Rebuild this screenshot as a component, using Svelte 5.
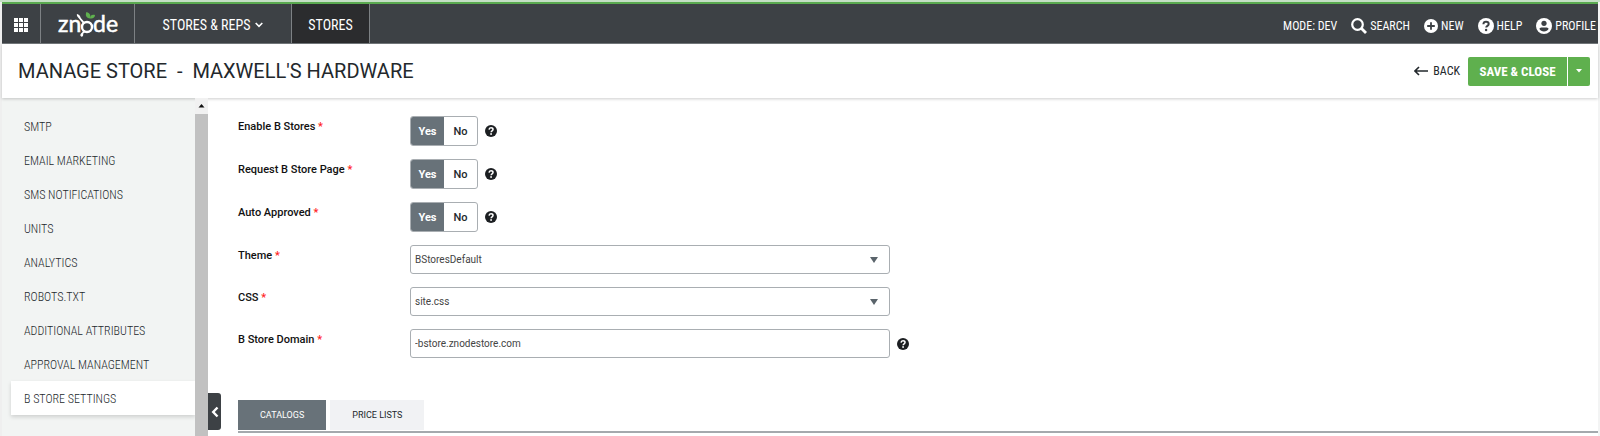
<script>
    const menu = [
        "SMTP",
        "Email Marketing",
        "SMS Notifications",
        "Units",
        "Analytics",
        "Robots.txt",
        "Additional Attributes",
        "Approval Management",
        "B Store Settings",
    ];

    const dots = [0, 5, 10];
    const tabs = ["Catalogs", "Price Lists"];

    let activeItem = $state("B Store Settings");
    let activeTab = $state("Catalogs");
    let theme = $state("BStoresDefault");
    let css = $state("site.css");
    let domain = $state("-bstore.znodestore.com");

    let toggles = $state([
        { id: "enable", label: "Enable B Stores", value: "yes" },
        { id: "request", label: "Request B Store Page", value: "yes" },
        { id: "approved", label: "Auto Approved", value: "yes" },
    ]);
</script>

{#snippet helpIcon(size)}
    <svg width={size} height={size} viewBox="0 0 16 16" aria-hidden="true">
        <circle class="disc" cx="8" cy="8" r="8" />
        <path
            class="mark"
            d="M5.4 6.2C5.5 4.6 6.5 3.8 8 3.8c1.600 0 2.700.9 2.700 2.200 0 1.900-2.500 1.800-2.500 3.600"
        />
        <circle class="dot" cx="8.1" cy="12" r="1.200" />
    </svg>
{/snippet}

<div class="page">
    <header class="topbar">
        <button class="apps" aria-label="Applications">
            <svg width="14" height="14" viewBox="0 0 14 14">
                {#each dots as y}
                    {#each dots as x}
                        <rect {x} {y} width="4" height="4" fill="#fff" />
                    {/each}
                {/each}
            </svg>
        </button>
        <a class="logo" href="/" aria-label="znode">
            <svg width="64" height="34" viewBox="0 0 64 34">
                <text x="2" y="24">zn</text>
                <text x="37" y="24">de</text>
                <g transform="translate(0 3)">
                    <circle cx="31" cy="16" r="5" fill="none" stroke="#fff" stroke-width="2.400" />
                    <path d="M27 12.500L23 7.500C21 5.500 20.500 4 21 3c1.800.3 3.300 2 3.800 4l4 4.500z" fill="#fff" />
                    <path d="M28 19.500l-3 3c-1 1.200-1 2.500.5 3.200 1.500-.2 2-1.700 1.600-3l2.400-2z" fill="#fff" />
                    <path d="M34 7.500C30 7 29 4 30.500 1c3.500 1 4.500 3.500 3.500 6.500z" fill="#5fb04e" />
                    <path d="M34 7.500C34 4.500 36 3 39 4c0 2.500-2 4-5 3.500z" fill="#5fb04e" />
                </g>
            </svg>
        </a>
        <button class="section">
            Stores &amp; Reps
            <svg width="8" height="6" viewBox="0 0 8 6">
                <path d="M.7 1L4 4.300 7.300 1" fill="none" stroke="#fff" stroke-width="1.600" />
            </svg>
        </button>
        <a class="current" href="/stores">Stores</a>
        <nav class="tools">
            <span>Mode: Dev</span>
            <a href="/search">
                <svg width="16" height="16" viewBox="0 0 16 16">
                    <circle cx="6.500" cy="6.500" r="5.300" fill="none" stroke="#fff" stroke-width="2.200" />
                    <path d="M10.500 10.500L15 15" stroke="#fff" stroke-width="2.800" />
                </svg>
                Search
            </a>
            <a href="/new">
                <svg width="14" height="14" viewBox="0 0 14 14">
                    <circle cx="7" cy="7" r="7" fill="#fff" />
                    <path d="M7 3.200v7.600M3.200 7h7.600" stroke="#3d4145" stroke-width="1.800" />
                </svg>
                New
            </a>
            <a class="light" href="/help">{@render helpIcon(16)} Help</a>
            <a href="/profile">
                <svg width="16" height="16" viewBox="0 0 16 16">
                    <circle cx="8" cy="8" r="8" fill="#fff" />
                    <circle cx="8" cy="5.300" r="2.600" fill="#3d4145" />
                    <path d="M3.300 10.800C4.500 9 6.200 9.600 8 9.600s3.500-.6 4.700 1.200c-1 1.800-2.700 2.800-4.700 2.800s-3.700-1-4.700-2.800z" fill="#3d4145" />
                </svg>
                Profile
            </a>
        </nav>
    </header>

    <div class="titlebar">
        <h1>Manage Store &nbsp;- &nbsp;Maxwell's Hardware</h1>
        <a class="back" href="/stores">
            <svg width="14" height="10" viewBox="0 0 14 10">
                <path d="M5 1L1 5l4 4M1 5h13" fill="none" stroke="#23282c" stroke-width="1.600" />
            </svg>
            Back
        </a>
        <div class="save">
            <button class="save-main">Save &amp; Close</button>
            <button class="save-more" aria-label="More save options">
                <svg width="6" height="4" viewBox="0 0 6 4"><path d="M0 0h6L3 3.500z" fill="#fff" /></svg>
            </button>
        </div>
    </div>

    <div class="body">
        <aside>
            <ul>
                {#each menu as item}
                    <li>
                        <button class:active={item === activeItem} onclick={() => (activeItem = item)}>
                            {item}
                        </button>
                    </li>
                {/each}
            </ul>
            <div class="scrollbar">
                <svg width="13" height="16" viewBox="0 0 13 16">
                    <path d="M3.500 9.500L6.500 6l3 3.500z" fill="#111" />
                </svg>
                <div class="thumb"></div>
            </div>
        </aside>
        <button class="collapse" aria-label="Collapse menu">
            <svg width="8" height="12" viewBox="0 0 8 12">
                <path d="M6.500 1.500L2.200 6l4.300 4.500" fill="none" stroke="#fff" stroke-width="2.400" />
            </svg>
        </button>

        <main>
            <form>
                {#each toggles as toggle}
                    <div class="row" role="group" aria-labelledby={toggle.id}>
                        <span class="label" id={toggle.id}>{toggle.label} <em>*</em></span>
                        <div class="switch">
                            <label>
                                <input type="radio" name={toggle.id + "-value"} value="yes" bind:group={toggle.value} />
                                <span>Yes</span>
                            </label>
                            <label>
                                <input type="radio" name={toggle.id + "-value"} value="no" bind:group={toggle.value} />
                                <span>No</span>
                            </label>
                        </div>
                        {@render helpIcon(12)}
                    </div>
                {/each}
                <div class="row">
                    <label class="label" for="theme">Theme <em>*</em></label>
                    <div class="select">
                        <select id="theme" bind:value={theme}>
                            <option>BStoresDefault</option>
                        </select>
                        <svg width="8" height="6" viewBox="0 0 8 6"><path d="M0 0h8L4 6z" fill="#5a646b" /></svg>
                    </div>
                </div>
                <div class="row">
                    <label class="label" for="css">CSS <em>*</em></label>
                    <div class="select">
                        <select id="css" bind:value={css}>
                            <option>site.css</option>
                        </select>
                        <svg width="8" height="6" viewBox="0 0 8 6"><path d="M0 0h8L4 6z" fill="#5a646b" /></svg>
                    </div>
                </div>
                <div class="row">
                    <label class="label" for="domain">B Store Domain <em>*</em></label>
                    <input id="domain" type="text" bind:value={domain} />
                    {@render helpIcon(12)}
                </div>
            </form>
            <div class="tabs" role="tablist">
                {#each tabs as tab}
                    <button
                        role="tab"
                        aria-selected={tab === activeTab}
                        class:active={tab === activeTab}
                        onclick={() => (activeTab = tab)}
                    >
                        {tab}
                    </button>
                {/each}
            </div>
        </main>
    </div>
</div>

<style>
    :global(body) {
        background: #fff;
    }

    .page {
        display: flex;
        flex-direction: column;
        box-sizing: border-box;
        min-height: 100vh;
        padding: 0 2px;
        border-top: 2px solid #c5dfc5;
        background: #fff;
        box-shadow: inset 2px 0 #efefef, inset -2px 0 #f3f4f4;
        font-family: "Roboto", sans-serif;
        color: #23282c;
    }

    button {
        padding: 0;
        border: 0;
        background: none;
        font: inherit;
        color: inherit;
        text-transform: uppercase;
        white-space: nowrap;
        cursor: pointer;
    }

    a {
        color: inherit;
        text-decoration: none;
    }

    svg {
        flex: none;
    }

    .topbar,
    .titlebar,
    aside,
    .tabs {
        font-family: "Roboto Condensed", "Liberation Sans Narrow", sans-serif;
        text-transform: uppercase;
    }

    .topbar {
        display: flex;
        height: 39px;
        border-top: 2px solid #5aaa50;
        border-bottom: 1px solid #74797c;
        background: #3d4145;
        color: #fff;
        font-size: 14px;
    }

    .topbar > button,
    .topbar > a {
        display: flex;
        align-items: center;
        justify-content: center;
        box-sizing: border-box;
        padding-top: 2px;
        border-right: 1px solid #7d8184;
    }

    .apps {
        width: 39px;
    }

    .logo {
        width: 94px;
    }

    .logo text {
        fill: #fff;
        stroke: #fff;
        stroke-width: 0.5px;
        font-family: Lato, sans-serif;
        font-size: 23px;
        text-transform: none;
    }

    .section {
        gap: 5px;
        width: 157px;
    }

    .current {
        width: 78px;
        background: #2b2c2e;
    }

    .tools {
        display: flex;
        gap: 14px;
        margin-left: auto;
        padding: 4px 2px 0 0;
        font-size: 12px;
    }

    .tools a,
    .tools span {
        display: flex;
        align-items: center;
        gap: 3px;
    }

    .disc {
        fill: #1c1f22;
    }

    .mark {
        fill: none;
        stroke: #fff;
        stroke-width: 2;
    }

    .dot {
        fill: #fff;
    }

    .light .disc {
        fill: #fff;
    }

    .light .mark {
        stroke: #3d4145;
    }

    .light .dot {
        fill: #3d4145;
    }

    .titlebar {
        display: flex;
        z-index: 1;
        align-items: center;
        height: 54px;
        padding: 0 8px 0 16px;
        background: #fff;
        box-shadow: 0 1px 3px rgba(0, 0, 0, 0.2);
    }

    h1 {
        margin: 0 auto 0 0;
        font-family: "Roboto", sans-serif;
        font-size: 20px;
        font-weight: 400;
    }

    .back {
        display: flex;
        align-items: center;
        gap: 5px;
        margin-right: 8px;
        font-size: 12px;
    }

    .save {
        display: flex;
        gap: 1px;
        height: 29px;
        color: #fff;
        font-size: 13px;
        font-weight: 700;
    }

    .save button {
        background: #5fb04e;
    }

    .save-main {
        width: 99px;
        border-radius: 2px 0 0 2px;
    }

    .save-more {
        display: flex;
        align-items: center;
        justify-content: center;
        width: 22px;
        border-radius: 0 2px 2px 0;
    }

    .body {
        display: flex;
        flex: 1;
    }

    aside {
        display: flex;
        width: 206px;
        background: #f2f4f3;
        font-size: 12px;
        font-weight: 300;
    }

    ul {
        flex: 1;
        margin: 0;
        padding: 11px 0 0 9px;
        list-style: none;
    }

    aside button {
        display: block;
        width: 100%;
        height: 34px;
        padding: 1px 0 0 13px;
        text-align: left;
    }

    aside button.active {
        background: #fff;
        box-shadow: 0 2px 4px rgba(0, 0, 0, 0.15);
    }

    .scrollbar {
        display: flex;
        z-index: 1;
        flex-direction: column;
        width: 13px;
        background: #f1f1f1;
    }

    .thumb {
        flex: 1;
        background: #c1c1c1;
    }

    .collapse {
        display: flex;
        align-self: flex-end;
        align-items: center;
        justify-content: center;
        width: 13px;
        height: 37px;
        margin-bottom: 6px;
        border-radius: 0 3px 3px 0;
        background: #3d4145;
    }

    main {
        flex: 1;
        padding: 18px 0 0 17px;
    }

    form {
        display: grid;
        gap: 13px;
    }

    .row {
        display: flex;
        align-items: center;
        gap: 7px;
    }

    .label {
        align-self: flex-start;
        width: 165px;
        padding-top: 4px;
        color: #111;
        font-size: 11px;
        font-weight: 500;
        line-height: 14px;
    }

    em {
        color: #f22;
        font-style: normal;
    }

    .switch {
        display: flex;
        box-sizing: border-box;
        width: 68px;
        height: 30px;
        overflow: hidden;
        border: 1px solid #a9aeb2;
        border-radius: 3px;
        font-size: 11px;
        font-weight: 500;
    }

    .switch label {
        display: flex;
        flex: 1;
    }

    .switch input {
        width: 0;
        height: 0;
        margin: 0;
        appearance: none;
    }

    .switch span {
        display: flex;
        flex: 1;
        align-items: center;
        justify-content: center;
    }

    .switch input:checked + span {
        background: #687279;
        color: #fff;
        font-weight: 700;
    }

    .select {
        display: grid;
        align-items: center;
    }

    .select select,
    .select svg {
        grid-area: 1 / 1;
    }

    .select svg {
        justify-self: end;
        margin-right: 12px;
        pointer-events: none;
    }

    select,
    input[type="text"] {
        box-sizing: border-box;
        width: 480px;
        height: 29px;
        padding: 0 4px;
        border: 1px solid #a9aeb2;
        border-radius: 3px;
        appearance: none;
        background: #fff;
        color: #444;
        font-family: inherit;
        font-size: 10px;
    }

    .tabs {
        display: flex;
        gap: 4px;
        margin-top: 42px;
        padding-bottom: 1px;
        border-bottom: 2px solid #a4a9ad;
        font-family: "Roboto", sans-serif;
        font-size: 9px;
    }

    .tabs button {
        height: 30px;
        padding: 0 22px;
        background: #f1f2f4;
    }

    .tabs .active {
        background: #687279;
        color: #fff;
    }
</style>
